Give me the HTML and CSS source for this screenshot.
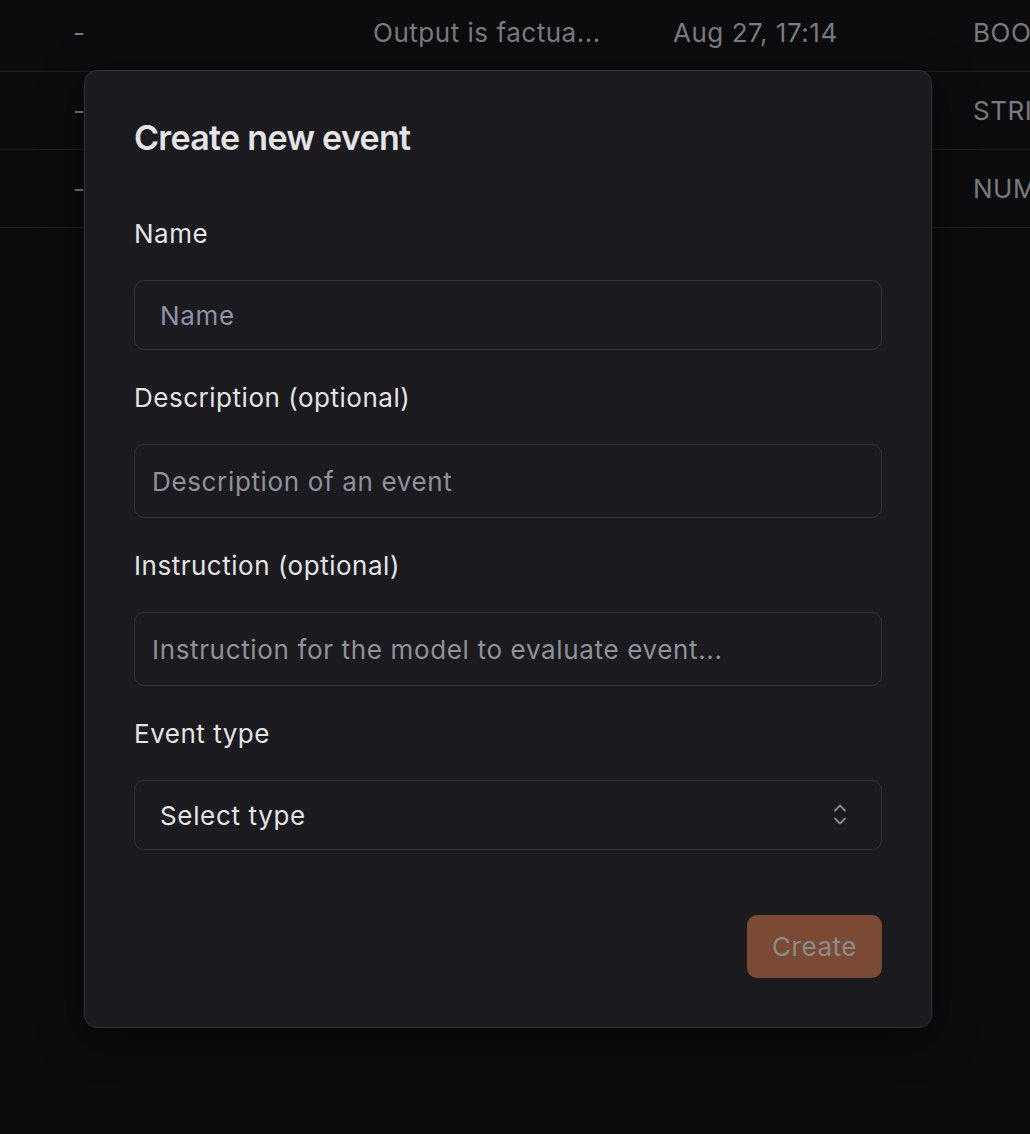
FILE: index.html
```html
<!DOCTYPE html>
<html lang="en">
<head>
<meta charset="utf-8">
<title>Create new event</title>
<link rel="stylesheet" href="styles.css">
</head>
<body>
<div class="page">
  <div class="table">
    <div class="row">
      <div class="cell">-</div>
      <div class="cell">Output is factua...</div>
      <div class="cell">Aug 27, 17:14</div>
      <div class="cell">BOOLEAN</div>
    </div>
    <div class="row">
      <div class="cell">-</div>
      <div class="cell">Output is relevant</div>
      <div class="cell">Aug 27, 17:14</div>
      <div class="cell">STRING</div>
    </div>
    <div class="row">
      <div class="cell">-</div>
      <div class="cell">Output score</div>
      <div class="cell">Aug 27, 17:14</div>
      <div class="cell">NUMBER</div>
    </div>
  </div>

  <div class="modal">
    <h2 class="title">Create new event</h2>
    <div class="field">
      <label class="label">Name</label>
      <div class="input input-name"><span class="ph ph-name">Name</span></div>
    </div>
    <div class="field">
      <label class="label">Description (optional)</label>
      <div class="input input-area"><span class="ph">Description of an event</span></div>
    </div>
    <div class="field">
      <label class="label">Instruction (optional)</label>
      <div class="input input-area"><span class="ph">Instruction for the model to evaluate event...</span></div>
    </div>
    <div class="field">
      <label class="label">Event type</label>
      <div class="input input-select">
        <span class="value">Select type</span>
        <svg class="chev" width="16" height="24" viewBox="0 0 16 24" fill="none" stroke="currentColor" stroke-width="1.8" stroke-linecap="round" stroke-linejoin="round">
          <path d="M3 7.5 L8 2.5 L13 7.5"/>
          <path d="M3 15.5 L8 20.5 L13 15.5"/>
        </svg>
      </div>
    </div>
    <div class="actions">
      <button class="btn">Create</button>
    </div>
  </div>
</div>
</body>
</html>
```

FILE: styles.css
```css
* { box-sizing: border-box; }

html, body {
  margin: 0;
  padding: 0;
  background: #0c0c0e;
  font-family: Inter, "Noto Sans", sans-serif;
  height: 100%;
}

.page {
  position: relative;
  width: 1030px;
  height: 1134px;
  overflow: hidden;
}

.table {
  margin-top: -6px;
}

.row {
  display: grid;
  grid-template-columns: 300px 300px 300px 1fr;
  padding-left: 73px;
  height: 78px;
  align-items: center;
  border-bottom: 1px solid #202024;
  white-space: nowrap;
  overflow: hidden;
}

.cell {
  color: #7a7a7f;
  font-size: 26px;
  letter-spacing: 0.02em;
  overflow: hidden;
}

.modal {
  position: absolute;
  left: 84px;
  top: 70px;
  width: 848px;
  background: #1a1a1f;
  border: 1px solid #313136;
  border-radius: 13px;
  padding: 47px 49px 49px;
  display: flex;
  flex-direction: column;
  box-shadow: 0 10px 40px rgba(0,0,0,0.5);
}

.title {
  margin: 0 0 60px;
  font-size: 34px;
  line-height: 40px;
  font-weight: 600;
  letter-spacing: -0.02em;
  color: #e4e4e7;
}

.field {
  display: flex;
  flex-direction: column;
  margin-bottom: 32px;
}

.label {
  font-size: 26px;
  line-height: 32px;
  letter-spacing: 0.02em;
  color: #e4e4e7;
  margin-bottom: 30px;
}

.input {
  border: 1.5px solid #333338;
  border-radius: 10px;
  display: flex;
  align-items: center;
  font-size: 26px;
  letter-spacing: 0.025em;
}

.input-name {
  height: 70px;
  padding: 0 25px;
}

.input-area {
  height: 74px;
  padding: 0 17px;
}

.input-select {
  height: 70px;
  padding: 0 25px;
  justify-content: space-between;
}

.ph {
  color: #8f929a;
}

.ph-name {
  color: #8b93a6;
}

.value {
  color: #e4e4e7;
}

.chev {
  color: #8a8a90;
  margin-right: 8px;
}

.actions {
  display: flex;
  justify-content: flex-end;
  margin-top: 33px;
}

.btn {
  font-family: inherit;
  font-size: 26px;
  letter-spacing: 0.02em;
  height: 63px;
  padding: 0 25px;
  border: none;
  border-radius: 10px;
  background: #7b4a35;
  color: #8c8c8c;
}
```
